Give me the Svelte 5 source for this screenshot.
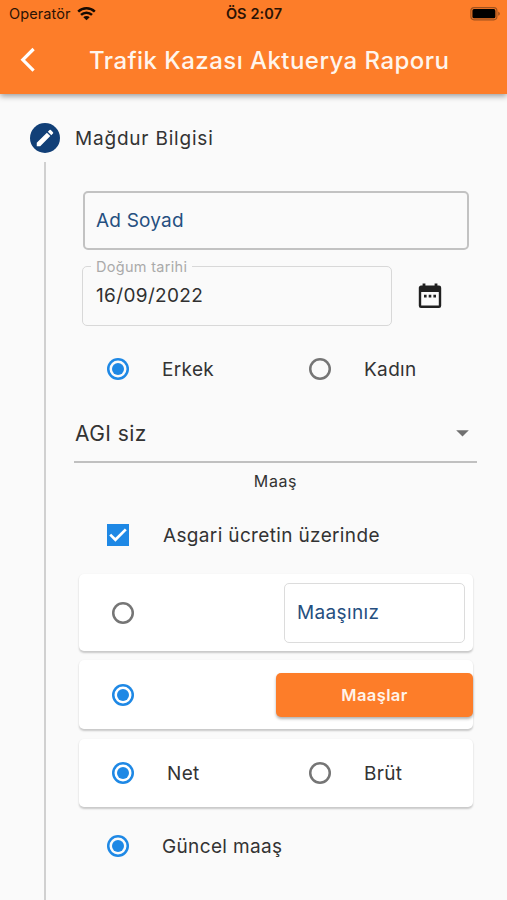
<script lang="ts">
	let fullName = $state('');
	let birthDate = $state('16/09/2022');
	let gender = $state('erkek');
	let aboveMinimum = $state(true);
	let salary = $state('');
	let salarySource = $state('list');
	let salaryType = $state('net');
	let period = $state('current');
</script>

<div class="screen">
	<header>
		<div class="status-bar">
			<div class="carrier">
				<span>Operatör</span>
				<svg width="19" height="14" viewBox="0 0 19 14" aria-hidden="true">
					<path d="M1.2 4.6a12 12 0 0 1 16.6 0" />
					<path d="M4 7.9a8 8 0 0 1 11 0" />
					<path class="dot" d="M9.5 13.2 6.3 10.2a4.6 4.6 0 0 1 6.4 0z" />
				</svg>
			</div>
			<span class="clock">ÖS 2:07</span>
			<svg class="battery" width="31" height="14" viewBox="0 0 31 14" aria-hidden="true">
				<rect class="shell" x="0.9" y="0.6" width="26" height="12.2" rx="3.2" />
				<rect x="2.4" y="2.1" width="23" height="9.2" rx="1.6" />
				<path class="cap" d="M28.2 4.6v4.2q1.7-.8 1.7-2.1t-1.7-2.1z" />
			</svg>
		</div>
		<div class="app-bar">
			<button class="back" aria-label="Geri">
				<svg width="16" height="26" viewBox="0 0 16 26">
					<path d="M13.6 2 2.8 12.8l10.8 10.8" />
				</svg>
			</button>
			<h1>Trafik Kazası Aktuerya Raporu</h1>
		</div>
	</header>

	<main>
		<div class="step">
			<span class="step-icon">
				<svg width="22" height="22" viewBox="0 0 24 24" aria-hidden="true">
					<path d="M3 17.25V21h3.75L17.81 9.94l-3.75-3.75L3 17.25zM20.71 7.04a1 1 0 0 0 0-1.41l-2.34-2.34a1 1 0 0 0-1.41 0l-1.83 1.83 3.75 3.75 1.83-1.83z" />
				</svg>
			</span>
			<h2>Mağdur Bilgisi</h2>
		</div>

		<div class="step-body">
			<input class="field name" type="text" placeholder="Ad Soyad" bind:value={fullName} />

			<div class="date-row">
				<fieldset>
					<legend>Doğum tarihi</legend>
					<input type="text" aria-label="Doğum tarihi" bind:value={birthDate} />
				</fieldset>
				<button class="calendar" aria-label="Tarih seç">
					<svg width="24" height="26" viewBox="0 0 24 26">
						<path class="frame" d="M3 3.8h18a1 1 0 0 1 1 1v18a1 1 0 0 1-1 1H3a1 1 0 0 1-1-1v-18a1 1 0 0 1 1-1z" />
						<path d="M4.6 0.5h2.8v3H4.6zM16.6 0.5h2.8v3h-2.8zM2 3.5h20v5.4H2z" />
						<path d="M6 11.8h2.6v2.6H6zM10.7 11.8h2.6v2.6h-2.6zM15.4 11.8H18v2.6h-2.6z" />
					</svg>
				</button>
			</div>

			<div class="options gender">
				<label><input type="radio" value="erkek" bind:group={gender} /><span>Erkek</span></label>
				<label><input type="radio" value="kadin" bind:group={gender} /><span>Kadın</span></label>
			</div>

			<button class="dropdown">
				<span>AGI siz</span>
				<svg width="13" height="7" viewBox="0 0 13 7" aria-hidden="true">
					<path d="M0.2 0.2h12.6L6.5 6.6z" />
				</svg>
			</button>

			<p class="caption">Maaş</p>

			<label class="single check">
				<input type="checkbox" bind:checked={aboveMinimum} />
				<svg width="22" height="22" viewBox="0 0 22 22" aria-hidden="true">
					<path d="M3.2 10.6 8.4 15.8 18.8 5.4" />
				</svg>
				<span>Asgari ücretin üzerinde</span>
			</label>

			<div class="card own">
				<input type="radio" value="own" aria-label="Maaşınız" bind:group={salarySource} />
				<input class="field salary" type="text" placeholder="Maaşınız" bind:value={salary} />
			</div>

			<div class="card list">
				<input type="radio" value="list" aria-label="Maaşlar" bind:group={salarySource} />
				<button class="primary">Maaşlar</button>
			</div>

			<div class="card options kind">
				<label><input type="radio" value="net" bind:group={salaryType} /><span>Net</span></label>
				<label><input type="radio" value="brut" bind:group={salaryType} /><span>Brüt</span></label>
			</div>

			<label class="single current">
				<input type="radio" value="current" bind:group={period} />
				<span>Güncel maaş</span>
			</label>
		</div>
	</main>
</div>

<style>
	:global(body) {
		background: #fafafa;
	}

	.screen {
		display: flex;
		flex-direction: column;
		height: 900px;
		overflow: hidden;
		background: #fafafa;
		color: #333;
		font-family: Inter, 'Liberation Sans', sans-serif;
		font-size: 19px;
		letter-spacing: 0.35px;
	}

	.screen *,
	.screen *::before {
		box-sizing: border-box;
	}

	button {
		padding: 0;
		border: none;
		background: none;
		font: inherit;
		letter-spacing: inherit;
		color: inherit;
		cursor: pointer;
	}

	svg {
		display: block;
		flex-shrink: 0;
	}

	header {
		height: 94px;
		flex-shrink: 0;
		background: #fd7d29;
		box-shadow: 0 2px 6px rgba(0, 0, 0, 0.4);
		z-index: 1;
	}

	.status-bar {
		display: grid;
		grid-template-columns: 1fr auto 1fr;
		align-items: center;
		height: 27px;
		padding: 0 6px 0 9px;
		color: #2b1305;
		font-size: 14.5px;
		letter-spacing: 0.1px;
	}

	.carrier {
		display: flex;
		align-items: center;
		gap: 6px;
	}

	.carrier path {
		fill: none;
		stroke: #160a02;
		stroke-width: 2.5;
	}

	.carrier .dot {
		fill: #160a02;
		stroke: none;
	}

	.clock {
		margin-right: 2px;
		font-weight: 600;
	}

	.battery {
		justify-self: end;
	}

	.battery .shell {
		fill: none;
		stroke: #a0521f;
		stroke-width: 1.2;
	}

	.battery .cap {
		fill: #a0521f;
	}

	.app-bar {
		display: flex;
		align-items: center;
		height: 66px;
		color: #fff5ec;
	}

	.back {
		margin-left: 20px;
		width: 69px;
	}

	.back path {
		fill: none;
		stroke: #fff;
		stroke-width: 3.2;
	}

	h1 {
		margin: 0;
		font-size: 24px;
		font-weight: 500;
		letter-spacing: 0.45px;
		white-space: nowrap;
	}

	main {
		flex: 1;
		display: flex;
		flex-direction: column;
		padding-top: 29px;
	}

	.step {
		display: flex;
		align-items: center;
		gap: 15px;
		height: 30px;
		margin-left: 30px;
	}

	.step-icon {
		display: grid;
		place-items: center;
		width: 30px;
		height: 30px;
		border-radius: 50%;
		background: #113f77;
	}

	.step-icon path {
		fill: #fff;
	}

	h2 {
		margin: 0;
		font-size: 19px;
		font-weight: 400;
		letter-spacing: 0.8px;
	}

	.step-body {
		flex: 1;
		display: flex;
		flex-direction: column;
		margin: 9px 30px 0 44px;
		padding: 29px 0 0 28px;
		border-left: 2px solid #d0d0d0;
	}

	.field {
		border: 1px solid #dcdcdc;
		border-radius: 5px;
		padding: 0 12px;
		background: transparent;
		font: inherit;
		letter-spacing: inherit;
		outline: none;
	}

	.field::placeholder {
		color: #254f80;
		opacity: 1;
	}

	.name {
		width: 386px;
		height: 59px;
		margin-left: 9px;
		padding: 0 11px 1px;
		border: 2px solid #c2c2c2;
		letter-spacing: 0.2px;
		flex-shrink: 0;
	}

	.date-row {
		display: flex;
		align-items: center;
		gap: 26px;
		height: 68px;
		margin: 8px 0 0 8px;
	}

	fieldset {
		width: 310px;
		height: 68px;
		min-width: 0;
		margin: 0;
		padding: 8px 5px 0;
		border: 1px solid #d8d8d8;
		border-radius: 5px;
	}

	legend {
		margin-left: 3px;
		padding: 0 5px;
		color: #aaa;
		font-size: 14.5px;
		line-height: 17px;
		letter-spacing: 0.3px;
	}

	fieldset input {
		width: 100%;
		height: 24px;
		padding: 0 8px;
		border: none;
		background: transparent;
		color: #303030;
		font: inherit;
		letter-spacing: inherit;
		outline: none;
	}

	.calendar {
		padding-top: 8px;
	}

	.calendar path {
		fill: #202020;
	}

	.calendar .frame {
		fill: none;
		stroke: #202020;
		stroke-width: 2.4;
	}

	input[type='radio'] {
		appearance: none;
		flex-shrink: 0;
		display: grid;
		place-items: center;
		width: 22px;
		height: 22px;
		margin: 0;
		border-radius: 50%;
		box-shadow: inset 0 0 0 2.5px #757575;
	}

	input[type='radio']:checked {
		box-shadow: inset 0 0 0 2.5px #1e88e5;
	}

	input[type='radio']:checked::before {
		content: '';
		width: 12px;
		height: 12px;
		border-radius: 50%;
		background: #1e88e5;
	}

	.options {
		display: grid;
		grid-template-columns: 202px 1fr;
		align-items: center;
	}

	label {
		display: flex;
		align-items: center;
		gap: 33px;
	}

	.gender {
		height: 50px;
		margin: 18px 0 0 33px;
	}

	.dropdown {
		display: flex;
		align-items: center;
		justify-content: space-between;
		width: 403px;
		height: 58px;
		margin-top: 11px;
		padding: 0 8px 0 1px;
		border-bottom: 2px solid #c0c0c0;
		font-size: 21px;
		letter-spacing: 0.45px;
		flex-shrink: 0;
	}

	.dropdown path {
		fill: #707070;
	}

	.caption {
		margin: 7px 0 0;
		font-size: 16px;
		line-height: 22px;
		letter-spacing: 0.6px;
		text-align: center;
	}

	.single {
		height: 40px;
		margin-left: 33px;
	}

	.check {
		position: relative;
		gap: 34px;
		margin-top: 23px;
	}

	.check input {
		appearance: none;
		width: 22px;
		height: 22px;
		margin: 0;
		border: 2.6px solid #757575;
	}

	.check input:checked {
		border: none;
		background: #1e88e5;
	}

	/* tick drawn over the box */
	.check svg {
		position: absolute;
		left: 0;
		pointer-events: none;
	}

	.check svg path {
		fill: none;
		stroke: #fff;
		stroke-width: 2.7;
	}

	.card {
		width: 394px;
		margin: 0 0 9px 5px;
		border-radius: 5px;
		background: #fff;
		box-shadow: 0 1.5px 2px rgba(0, 0, 0, 0.2);
		flex-shrink: 0;
	}

	.own,
	.list {
		display: flex;
		align-items: center;
		justify-content: space-between;
		padding-left: 33px;
	}

	.own {
		height: 77px;
		margin-top: 19px;
		padding-right: 8px;
	}

	.salary {
		width: 181px;
		height: 60px;
	}

	.list {
		height: 69px;
		margin-bottom: 10px;
	}

	.primary {
		width: 197px;
		height: 44px;
		border-radius: 5px;
		background: #fd7d29;
		box-shadow: 0 2px 3px rgba(0, 0, 0, 0.3);
		color: #fff3e9;
		font-size: 16.5px;
		font-weight: 600;
		letter-spacing: 0.4px;
	}

	.kind {
		grid-template-columns: 197px 1fr;
		height: 68px;
		padding-left: 33px;
		margin-bottom: 0;
	}

	.current {
		margin-top: 19px;
	}
</style>
